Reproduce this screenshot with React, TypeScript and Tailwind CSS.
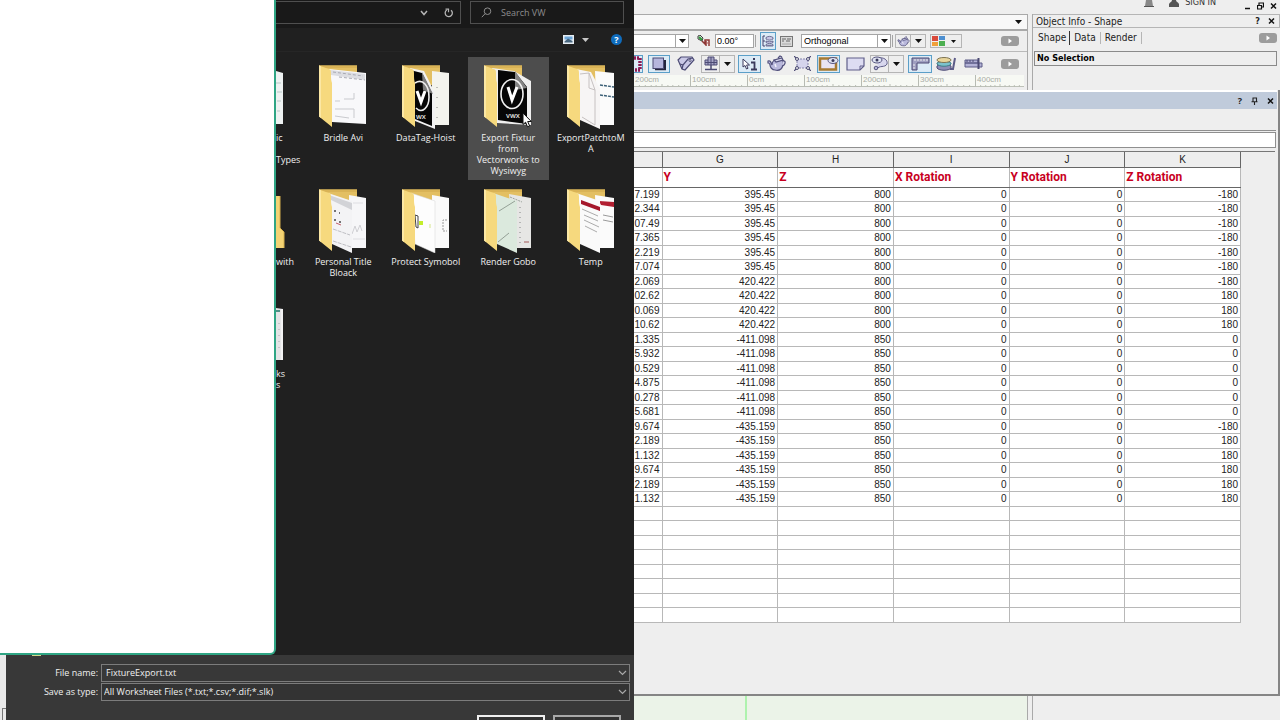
import { useState } from 'react';
import type { ReactNode } from 'react';

const UI = "font-['Open_Sans','Noto_Sans',sans-serif]";
const TAHOMA = "font-['DejaVu_Sans_Condensed','DejaVu_Sans',sans-serif]";
const ARIAL = "font-['Liberation_Sans',Arial,sans-serif]";

const ROWS: string[][] = [
  ['7.199', '395.45', '800', '-180'],
  ['2.344', '395.45', '800', '-180'],
  ['07.49', '395.45', '800', '-180'],
  ['7.365', '395.45', '800', '-180'],
  ['2.219', '395.45', '800', '-180'],
  ['7.074', '395.45', '800', '-180'],
  ['2.069', '420.422', '800', '-180'],
  ['02.62', '420.422', '800', '180'],
  ['0.069', '420.422', '800', '180'],
  ['10.62', '420.422', '800', '180'],
  ['1.335', '-411.098', '850', '0'],
  ['5.932', '-411.098', '850', '0'],
  ['0.529', '-411.098', '850', '0'],
  ['4.875', '-411.098', '850', '0'],
  ['0.278', '-411.098', '850', '0'],
  ['5.681', '-411.098', '850', '0'],
  ['9.674', '-435.159', '850', '-180'],
  ['2.189', '-435.159', '850', '180'],
  ['1.132', '-435.159', '850', '180'],
  ['9.674', '-435.159', '850', '180'],
  ['2.189', '-435.159', '850', '180'],
  ['1.132', '-435.159', '850', '180'],
];

const COLUMNS = [
  { letter: 'G', title: 'Y' },
  { letter: 'H', title: 'Z' },
  { letter: 'I', title: 'X Rotation' },
  { letter: 'J', title: 'Y Rotation' },
  { letter: 'K', title: 'Z Rotation' },
];

/* ---------- folder thumbnails ---------- */

function Folder({ children }: { children: ReactNode }) {
  return (
    <svg width="48" height="64" viewBox="0 0 48 64" aria-hidden="true">
      <path d="M0 0.5H38V20H10Z" fill="#e3bf62" />
      <path d="M0 0.5H38V3H2Z" fill="#d9b356" />
      {children}
      <path d="M0 0.5L11 4.5C13 6 11 13 13 18V62L0 51.5Z" fill="#f6d97e" />
      <path d="M0 0.5L2 1.2V53L0 51.5Z" fill="#fbe7a4" />
    </svg>
  );
}

function BridlePages() {
  return (
    <>
      <path d="M10 4L47 8V59L13 57Z" fill="#f8f8fa" />
      <path d="M11 5L46 9V15L12 10Z" fill="#dcdde2" />
      <path d="M14 7L44 11M20 12L46 15" stroke="#a9aab4" strokeWidth="1" strokeDasharray="3 2" />
      <path d="M25 34H35V28M16 44H35V53M16 36H21M16 51L30 53" fill="none" stroke="#c9cace" strokeWidth="1" />
    </>
  );
}

function HoistPages() {
  return (
    <>
      <path d="M30 6L47 8V60H30Z" fill="#f4f4ee" />
      <path d="M35 22V55" stroke="#8a8a8a" strokeWidth="1" strokeDasharray="1 9" />
      <path d="M8 3L22 6L33 28V64L13 56Z" fill="#f2f2f2" />
      <path d="M8 5L20 8L30 28V61L13 54Z" fill="#060606" />
      <path d="M20 7L21 25L31 29Z" fill="#7d7d7d" />
      <path d="M13 18C21 13 27 21 27 32C27 43 20 49 14 43" fill="none" stroke="#eee" strokeWidth="1.600" />
      <path d="M15 26L19 37L23 26" fill="none" stroke="#fff" strokeWidth="3" />
      <text x="14" y="54" fontSize="6" fontWeight="700" fill="#ddd">WX</text>
    </>
  );
}

function VwxPages() {
  return (
    <>
      <path d="M8 3L30 6L47 16V60L13 58Z" fill="#efefef" />
      <path d="M14 5L31 7L43 22V59L14 55Z" fill="#060606" />
      <path d="M31 6L31 25L43 23Z" fill="#858585" />
      <ellipse cx="28" cy="29" rx="11" ry="14.5" fill="none" stroke="#f2f2f2" strokeWidth="1.600" />
      <path d="M24 22L28 35L33 22" fill="none" stroke="#fff" strokeWidth="3" />
      <text x="22" y="53" fontSize="6" fontWeight="700" fill="#ddd">VWX</text>
    </>
  );
}

function PatchPages() {
  return (
    <>
      <path d="M28 6L47 8V60H30Z" fill="#fbfbfb" />
      <path d="M33 20L47 22M33 30L47 32" stroke="#3d6178" strokeWidth="1.500" strokeDasharray="3 1" />
      <path d="M9 4L24 7L33 24V64L13 55Z" fill="#f7f5f5" />
      <path d="M13 9L22 8L28 25V60L15 52M22 8V23L28 25" fill="none" stroke="#c6c1c1" strokeWidth="1" />
    </>
  );
}

function TitlePages() {
  return (
    <>
      <path d="M30 6L47 9V59H30Z" fill="#f6f6f8" />
      <path d="M33 45L36 37L38 43L41 36L43 42" fill="none" stroke="#d0d0d4" strokeWidth="1" />
      <path d="M34 14H44M34 50H46" stroke="#dedee2" strokeWidth="1" />
      <path d="M9 4L33 12V64L13 55Z" fill="#f3f3f5" />
      <path d="M10 6L33 14V21L12 11Z" fill="#d2d3d7" />
      <path d="M15 22H17M20 24H21M15 31H17M20 33H22" stroke="#4a4a4a" strokeWidth="1.500" />
      <path d="M17 34L22 36" stroke="#c0606a" strokeWidth="1" />
      <path d="M14 40L31 46M14 52L32 58" stroke="#bfbfc4" strokeWidth="1" strokeDasharray="4 1" />
    </>
  );
}

function SymbolPages() {
  return (
    <>
      <path d="M30 6L47 9V59H30Z" fill="#fafafa" />
      <path d="M45 31H41V42H45" fill="none" stroke="#999" strokeWidth="1" strokeDasharray="2 1" />
      <path d="M9 4L33 12V64L13 55Z" fill="#fdfdfd" stroke="#d6d6d6" strokeWidth="0.500" />
      <path d="M13 26L16 27V39L14 38Z" fill="none" stroke="#444" strokeWidth="1" />
      <rect x="17" y="32" width="4" height="4" fill="#c3ee2a" />
      <path d="M28 35V39" stroke="#d5e58a" strokeWidth="1" />
    </>
  );
}

function GoboPages() {
  return (
    <>
      <path d="M25 5L47 9V59H30Z" fill="#e6e6e4" />
      <path d="M36 18V55" stroke="#b4b4b4" strokeWidth="2" strokeDasharray="1 4" />
      <path d="M40 53H45" stroke="#a35a5a" strokeWidth="1" />
      <path d="M9 4L33 12V64L13 55Z" fill="#dbe9dd" />
      <path d="M15 22L31 12M14 53L25 44" stroke="#94a096" strokeWidth="1" />
      <path d="M26 8L38 13" stroke="#9aa39b" strokeWidth="1" strokeDasharray="2 1" />
    </>
  );
}

function TempPages() {
  return (
    <>
      <path d="M28 6L47 9V59H30Z" fill="#fbfbfb" />
      <path d="M32 12L47 13V18L34 16Z" fill="#b21f31" />
      <path d="M36 26L46 28M36 31L46 33" stroke="#9a9a9a" strokeWidth="1" />
      <path d="M9 4L33 12V64L13 55Z" fill="#fafafa" />
      <path d="M14 11L33 18V22L14 15Z" fill="#a5182b" />
      <path d="M15 20L31 27M17 26L31 32M17 31L32 38M18 37L30 43" stroke="#ababab" strokeWidth="1" />
    </>
  );
}

/* Thumbnails of the first column, whose left part lies under the white panel. */
function CutThumb({ kind }: { kind: 'paper' | 'folder' | 'sheet' }) {
  return (
    <svg width="9" height="64" viewBox="0 0 9 64" aria-hidden="true">
      {kind === 'paper' && (
        <>
          <path d="M0 6L7 8V59H0Z" fill="#eef2f2" />
          <path d="M0 18H5M1 27H6M1 36H5M1 46H4" stroke="#b9c8c8" strokeWidth="1" />
        </>
      )}
      {kind === 'folder' && (
        <>
          <path d="M0 7H4V39L8 43V59H0Z" fill="#f3d373" />
          <path d="M4 7V39L8 43V59" fill="none" stroke="#d3ae4d" strokeWidth="1" />
        </>
      )}
      {kind === 'sheet' && (
        <>
          <path d="M0 7L7 8V59H0Z" fill="#e4e4e6" />
          <path d="M0 10H4" stroke="#4f8f86" strokeWidth="2" />
          <path d="M3 22V52" stroke="#a9a9ad" strokeWidth="1" strokeDasharray="1 5" />
          <path d="M6 8V59" stroke="#fff" strokeWidth="1" />
        </>
      )}
    </svg>
  );
}

interface TileData {
  name: string;
  pages: ReactNode;
}

const FIRST_ROW: TileData[] = [
  { name: 'Bridle Avi', pages: <BridlePages /> },
  { name: 'DataTag-Hoist', pages: <HoistPages /> },
  { name: 'Export Fixtur from Vectorworks to Wysiwyg', pages: <VwxPages /> },
  { name: 'ExportPatchtoMA', pages: <PatchPages /> },
];

const SECOND_ROW: TileData[] = [
  { name: 'Personal Title Bloack', pages: <TitlePages /> },
  { name: 'Protect Symobol', pages: <SymbolPages /> },
  { name: 'Render Gobo', pages: <GoboPages /> },
  { name: 'Temp', pages: <TempPages /> },
];

function Tile({ tile, hovered }: { tile: TileData; hovered?: boolean }) {
  return (
    <button
      type="button"
      className={`relative mx-px flex flex-col items-center pt-2 ${hovered ? 'h-[123px] bg-[#4d4d4d]' : ''}`}
    >
      <Folder>{tile.pages}</Folder>
      <span className="mt-[3px] w-[70px] text-center leading-[11px] wrap-anywhere">{tile.name}</span>
      {hovered && (
        <svg className="absolute left-[54px] top-[55px]" width="11" height="17" viewBox="0 0 11 17" aria-hidden="true">
          <path d="M1 1V12.500L3.600 10.200L5.500 14.800L7.600 13.900L5.700 9.500H9.300Z" fill="#fff" stroke="#111" strokeWidth="1" />
        </svg>
      )}
    </button>
  );
}

function CutTile({ kind, lines }: { kind: 'paper' | 'folder' | 'sheet'; lines: string[] }) {
  return (
    <div className="flex flex-col pt-2">
      <CutThumb kind={kind} />
      <div className="mt-[3px] leading-[11px]">
        {lines.map((line, i) => (
          <div key={i} className="h-[11px]">{line}</div>
        ))}
      </div>
    </div>
  );
}

function FilePane() {
  return (
    <div className="flex min-w-0 flex-1 flex-col bg-[#202020]">
      <div className="flex h-7 items-start gap-[9px] bg-[#191919] pr-[10px] pt-px">
        <div className="flex h-[23px] flex-1 items-center justify-end gap-4 border border-l-0 border-[#4f4f4f] pr-[6px]">
          <button type="button" aria-label="Previous locations">
            <svg width="8" height="6" viewBox="0 0 8 6"><path d="M1 1L4 4.500L7 1" fill="none" stroke="#b5b5b5" strokeWidth="1.500" /></svg>
          </button>
          <button type="button" aria-label="Refresh">
            <svg width="10" height="10" viewBox="0 0 10 10">
              <path d="M2.800 2A3.600 3.600 0 1 0 7 2.200" fill="none" stroke="#b5b5b5" strokeWidth="1.300" />
              <path d="M1.500 1.200H4.500V4.200" fill="none" stroke="#b5b5b5" strokeWidth="1.200" />
            </svg>
          </button>
        </div>
        <label className="flex h-[23px] w-[154px] items-center gap-[9px] border border-[#4f4f4f] pl-[10px]">
          <svg width="11" height="11" viewBox="0 0 11 11" aria-hidden="true">
            <circle cx="6.500" cy="4.200" r="3.300" fill="none" stroke="#8d8d8d" strokeWidth="1" />
            <path d="M4.200 6.600L0.800 10.200" stroke="#8d8d8d" strokeWidth="1" />
          </svg>
          <input
            type="text"
            aria-label="Search VW"
            placeholder="Search VW"
            className="w-24 bg-transparent text-[9px] outline-none placeholder:text-[#8d8d8d]"
          />
        </label>
      </div>
      <div className="flex h-6 items-center justify-end border-b border-[#262626] pr-3">
        <button type="button" aria-label="Change your view" className="flex items-center gap-2">
          <svg width="11" height="9" viewBox="0 0 11 9">
            <rect width="11" height="9" fill="#e6edf3" />
            <rect x="1.500" y="1.500" width="8" height="3" fill="#6ba5d8" />
            <path d="M1.500 6.500L5 3.500L9.500 6V7.500H1.500Z" fill="#47667f" />
          </svg>
          <svg width="7" height="4" viewBox="0 0 7 4"><path d="M0 0H7L3.500 4Z" fill="#c8c8c8" /></svg>
        </button>
        <button
          type="button"
          aria-label="Help"
          className="ml-[22px] flex size-[11px] items-center justify-center rounded-full bg-[#0f6cbd] text-[9px] leading-none font-bold text-white"
        >
          ?
        </button>
      </div>
      <div className="mt-[5px] grid grid-cols-[26px_repeat(4,1fr)] grid-rows-[124px_112px_112px] pr-[2px] text-[9px] text-[#f0f0f0]">
        <CutTile kind="paper" lines={['ic', '', 'Types']} />
        {FIRST_ROW.map((tile, i) => (
          <Tile key={tile.name} tile={tile} hovered={i === 2} />
        ))}
        <CutTile kind="folder" lines={['with']} />
        {SECOND_ROW.map((tile) => (
          <Tile key={tile.name} tile={tile} />
        ))}
        <CutTile kind="sheet" lines={['ks', 's']} />
      </div>
    </div>
  );
}

function ComboArrow() {
  return (
    <svg className="pointer-events-none mr-[2px] shrink-0" width="9" height="6" viewBox="0 0 9 6" aria-hidden="true">
      <path d="M1 1L4.500 4.500L8 1" fill="none" stroke="#a8a8a8" strokeWidth="1.200" />
    </svg>
  );
}

function SaveForm() {
  const [fileName, setFileName] = useState('FixtureExport.txt');

  return (
    <div className="flex h-[65px] shrink-0 bg-[#383838]">
      <div className="flex w-[6px] items-end bg-[#e9e9e9]">
        <div className="ml-[2px] h-3 flex-1 border-l border-t border-[#777]" />
      </div>
      <form className="flex flex-1 flex-col pr-1 text-[9px] text-[#f0f0f0]" onSubmit={(e) => e.preventDefault()}>
        <div className="ml-[26px] h-px w-[9px] bg-[#d4d98a]" />
        <div className="mt-2 flex items-center gap-[3px]">
          <label htmlFor="file-name" className="w-[92px] text-right">File name:</label>
          <div className="flex h-[18px] flex-1 items-center border border-[#7c7c7c]">
            <input
              id="file-name"
              type="text"
              value={fileName}
              onChange={(e) => setFileName(e.target.value)}
              className="min-w-0 flex-1 bg-transparent pl-1 outline-none"
            />
            <ComboArrow />
          </div>
        </div>
        <div className="mt-px flex items-center gap-[3px]">
          <label htmlFor="save-type" className="w-[92px] text-right">Save as type:</label>
          <div className="flex h-[18px] flex-1 items-center border border-[#7c7c7c] bg-[#333]">
            <select id="save-type" className="min-w-0 flex-1 appearance-none bg-transparent pl-[2px] outline-none">
              <option>All Worksheet Files (*.txt;*.csv;*.dif;*.slk)</option>
            </select>
            <ComboArrow />
          </div>
        </div>
        <div className="mt-[14px] flex flex-1 justify-end gap-2 overflow-hidden pr-[9px]">
          <button type="submit" aria-label="Save" className="h-5 w-[68px] border-2 border-[#efefef] bg-[#333]" />
          <button type="button" aria-label="Cancel" className="h-5 w-[68px] border-2 border-[#a8a8a8] bg-[#333]" />
        </div>
      </form>
    </div>
  );
}

/* ---------- toolbars ---------- */

function Down() {
  return (
    <svg width="7" height="4" viewBox="0 0 7 4" aria-hidden="true">
      <path d="M0 0H7L3.500 4Z" fill="#111" />
    </svg>
  );
}

function Overflow({ className = '' }: { className?: string }) {
  return (
    <button
      type="button"
      aria-label="More"
      className={`flex h-[10px] w-[18px] shrink-0 items-center justify-center rounded-[3px] bg-[#9c9c9c] ${className}`}
    >
      <svg width="4" height="6" viewBox="0 0 4 6"><path d="M0.500 0.500L4 3L0.500 5.500Z" fill="#fff" /></svg>
    </button>
  );
}

function Tool({ label, active, className, children }: { label: string; active?: boolean; className: string; children: ReactNode }) {
  return (
    <button
      type="button"
      aria-label={label}
      aria-pressed={active}
      className={`flex h-[18px] shrink-0 items-center justify-center ${active ? 'border border-[#5b9fc8] bg-[#dcebf6]' : ''} ${className}`}
    >
      {children}
    </button>
  );
}

function SplitTool({ label, className, children }: { label: string; className: string; children: ReactNode }) {
  return (
    <button
      type="button"
      aria-label={label}
      className={`flex shrink-0 items-stretch border border-[#b5b5b5] ${className}`}
    >
      <span className="flex flex-1 items-center justify-center border-r border-[#b5b5b5]">{children}</span>
      <span className="flex w-[14px] items-center justify-center"><Down /></span>
    </button>
  );
}

function Teapot({ size }: { size: number }) {
  return (
    <svg width={size} height={size - 2} viewBox="0 0 19 17" aria-hidden="true">
      <path d="M1 6C3 5 4 7 5 10C5 6 8 4 12 4C15 4 17 6 16 10C15 14 12 16 8 15C5 15 3 12 3 10C3 9 2 8 1 8Z" fill="#b9b8dc" stroke="#51507c" strokeWidth="1.200" />
      <path d="M7 5L15 3L16 5L9 7ZM11 3L13 1L15 2M16 6C19 5 19 10 15 11" fill="#d8d7ee" stroke="#51507c" strokeWidth="1.200" />
      <path d="M8 9L9 12" stroke="#f2f2fb" strokeWidth="1.500" />
    </svg>
  );
}

function ViewBar() {
  return (
    <div className="flex h-5 items-center pr-2">
      <div className="flex h-[14px] w-[55px] shrink-0 items-stretch border border-l-0 border-[#a5a5a5] bg-white">
        <select aria-label="Saved view" className="w-0 flex-1 appearance-none bg-white outline-none" />
        <span className="flex w-[13px] items-center justify-center border-l border-[#a5a5a5]"><Down /></span>
      </div>
      <svg className="ml-2 shrink-0" width="14" height="12" viewBox="0 0 14 12" aria-hidden="true">
        <path d="M1 1L3 0L6 3L5 6L1 4Z" fill="#dfe8df" stroke="#3f3f3f" strokeWidth="1" />
        <path d="M2 2L5 5" stroke="#2f9a3a" strokeWidth="2" />
        <path d="M5 6L8 9V5H12V11M9 11V6" fill="none" stroke="#8f3836" strokeWidth="1.500" />
        <path d="M10 8H11" stroke="#d89a98" strokeWidth="2" />
      </svg>
      <input
        type="text"
        aria-label="Rotation"
        defaultValue="0.00°"
        className={`ml-1 h-[14px] w-[39px] shrink-0 border border-[#a5a5a5] bg-white pl-px text-[9px] outline-none ${ARIAL}`}
      />
      <span className="ml-px h-3 w-px bg-[#a5a5a5]" />
      <Tool label="Unified view" active className="ml-1 w-4">
        <svg width="12" height="12" viewBox="0 0 12 12">
          <path d="M1 1V11M1 1H3M1 6H3M1 11H3" fill="none" stroke="#44436c" strokeWidth="1" />
          <path d="M4 2.500C6 1 9 1 11 2.500V4C9 5.500 6 5.500 4 4ZM4 6C6 7 9 7 11 6V7.500C9 9 6 9 4 7.500ZM4 9.500C6 10.500 9 10.500 11 9.500V11H4Z" fill="#c7c6e4" stroke="#56557f" strokeWidth="0.800" />
        </svg>
      </Tool>
      <Tool label="View options" className="ml-[3px] w-[14px]">
        <svg width="13" height="11" viewBox="0 0 13 11">
          <rect x="0.500" y="0.500" width="12" height="10" fill="#d9d9d9" stroke="#777" />
          <path d="M2 3H6M7 3H11M2 5H4M6 5H10" stroke="#666" strokeWidth="1" />
          <path d="M2 8H11" stroke="#aaa" strokeWidth="1" />
        </svg>
      </Tool>
      <div className="ml-2 flex h-[14px] w-[90px] shrink-0 items-stretch border border-[#a5a5a5] bg-white">
        <select aria-label="Projection" className={`min-w-0 flex-1 appearance-none bg-white pl-[2px] text-[9px] leading-[12px] outline-none ${ARIAL}`}>
          <option>Orthogonal</option>
        </select>
        <span className="flex w-[13px] items-center justify-center border-l border-[#a5a5a5]"><Down /></span>
      </div>
      <span className="ml-px h-3 w-px bg-[#a5a5a5]" />
      <SplitTool label="Render mode" className="ml-[2px] h-[14px] w-[31px]"><Teapot size={13} /></SplitTool>
      <button type="button" aria-label="Colours" className="ml-1 flex h-[14px] w-8 shrink-0 items-center justify-between border border-[#b5b5b5] pr-[5px] pl-px">
        <svg width="13" height="10" viewBox="0 0 13 10">
          <rect width="6" height="5" fill="#d94a3c" /><rect x="7" width="6" height="4" fill="#4d8fd0" />
          <rect y="6" width="6" height="4" fill="#f0a03a" /><rect x="7" y="5" width="6" height="5" fill="#4caf50" />
        </svg>
        <svg width="5" height="3" viewBox="0 0 5 3"><path d="M0 0H5L2.500 3Z" fill="#111" /></svg>
      </button>
      <Overflow className="ml-auto" />
    </div>
  );
}

function ModeBar() {
  return (
    <div className="flex h-6 items-center border-t border-[#b9b9b9] pr-2">
      <Tool label="Marquee" active className="w-[9px] border-l-0">
        <svg width="8" height="16" viewBox="0 0 8 16">
          <path d="M0 2H6V14H0" fill="none" stroke="#8d1c55" strokeWidth="3.500" strokeDasharray="2 1" />
        </svg>
      </Tool>
      <Tool label="Drop shadow" active className="ml-[5px] w-[22px]">
        <svg width="14" height="14" viewBox="0 0 14 14">
          <path d="M3 12H13V3" fill="none" stroke="#24243c" strokeWidth="2.500" />
          <rect x="1" y="1" width="10.500" height="10.500" fill="#b6b6dd" stroke="#4c4b74" />
        </svg>
      </Tool>
      <Tool label="Tag" className="ml-[7px] w-[18px]">
        <svg width="18" height="15" viewBox="0 0 18 15">
          <path d="M1 4L4 1L15 1L17 4L8 14L5 13Z" fill="#c9c8e6" stroke="#4c4b74" strokeWidth="1.200" />
          <path d="M3 8L6 9L11 3L16 2M5 13L6 9" fill="none" stroke="#4c4b74" strokeWidth="1.200" />
          <circle cx="13" cy="4.500" r="1" fill="#fff" stroke="#4c4b74" />
        </svg>
      </Tool>
      <SplitTool label="Structure" className="ml-[6px] h-[18px] w-[34px]">
        <svg width="14" height="15" viewBox="0 0 14 15">
          <path d="M7 1V13M1 13.500H13" stroke="#4c4b74" strokeWidth="1.500" />
          <path d="M1 4V9H13V4H10V1H4V4Z" fill="#a5a4c6" stroke="#4c4b74" />
          <path d="M4 4V9M10 4V9M1 6.500H13M7 1V9" stroke="#4c4b74" strokeWidth="1" />
        </svg>
      </SplitTool>
      <Tool label="Interactive" active className="ml-[3px] w-[23px]">
        <svg width="15" height="14" viewBox="0 0 15 14">
          <path d="M1 2V10L3 8.500L4.500 12L6 11.300L4.600 8H7.500Z" fill="#fff" stroke="#3a3a5c" strokeWidth="1" />
          <path d="M9 5.500H12.500V12M9 12.500H15" fill="none" stroke="#3a3a5c" strokeWidth="1.800" />
          <path d="M11 2H13" stroke="#3a3a5c" strokeWidth="2" />
        </svg>
      </Tool>
      <Tool label="Render" className="ml-[6px] w-[19px]"><Teapot size={19} /></Tool>
      <Tool label="Reshape" className="ml-2 w-[17px]">
        <svg width="17" height="15" viewBox="0 0 17 15">
          <rect x="3" y="3" width="11" height="9" fill="#d5d4ec" stroke="#8685ac" strokeDasharray="2 1" />
          <g fill="#eee" stroke="#4c4b74">
            <circle cx="3" cy="3" r="1.500" /><circle cx="14" cy="3" r="1.500" />
            <circle cx="3" cy="12" r="1.500" /><circle cx="14" cy="12" r="1.500" />
          </g>
          <path d="M0 0L2 2M17 0L15 2M0 15L2 13M17 15L15 13" stroke="#4c4b74" strokeWidth="1.200" />
        </svg>
      </Tool>
      <Tool label="Viewport visibility" active className="ml-[6px] w-[23px]">
        <svg width="21" height="15" viewBox="0 0 21 15">
          <rect x="2" y="2.500" width="16" height="11" fill="#e9e4f2" stroke="#a77a31" strokeWidth="2.500" />
          <ellipse cx="15" cy="4.500" rx="5" ry="3" fill="#dfe3f1" stroke="#565580" />
          <circle cx="15" cy="4.500" r="1.500" fill="#3a3a5c" />
        </svg>
      </Tool>
      <Tool label="Sheet" className="ml-[6px] w-[19px]">
        <svg width="19" height="14" viewBox="0 0 19 14">
          <path d="M1 1H18V9L14 13H1Z" fill="#dddcf2" stroke="#605f8a" strokeWidth="1.200" />
          <path d="M18 9H14V13" fill="none" stroke="#605f8a" />
        </svg>
      </Tool>
      <SplitTool label="Visibility" className="ml-[5px] h-[18px] w-[34px]">
        <svg width="17" height="15" viewBox="0 0 17 15">
          <path d="M7 2C13 1 17 4 16 8C14 12 8 9 6 13" fill="#d8d7ee" stroke="#605f8a" />
          <ellipse cx="6" cy="4" rx="5" ry="3" fill="#dfe3f1" stroke="#565580" />
          <circle cx="6" cy="4" r="1.500" fill="#3a3a5c" />
          <circle cx="5" cy="12" r="1.800" fill="#b7b6d8" stroke="#565580" />
        </svg>
      </SplitTool>
      <Tool label="Rulers" active className="ml-1 w-6">
        <svg width="19" height="14" viewBox="0 0 19 14">
          <path d="M1 1H18V6H6V13H1Z" fill="#9f9fc0" stroke="#4c4b74" />
          <path d="M4 2V4M7 2V4M10 2V4M13 2V4M16 2V4M2 8H4M2 11H4" stroke="#eee" />
        </svg>
      </Tool>
      <Tool label="Layers" className="ml-1 w-5">
        <svg width="20" height="15" viewBox="0 0 20 15">
          <path d="M1 10C3 8 13 8 15 10V12C13 15 3 15 1 12Z" fill="#8e8db7" stroke="#4c4b74" />
          <path d="M1 7C3 5 13 5 15 7V8C13 11 3 11 1 8Z" fill="#7cc2cd" stroke="#3f7d87" />
          <ellipse cx="8" cy="4" rx="7" ry="2.500" fill="#e8d59b" stroke="#7e7453" />
          <path d="M19 2L17 13H14" fill="none" stroke="#5c5b88" strokeWidth="2" />
        </svg>
      </Tool>
      <Tool label="Align" className="ml-2 w-[19px]">
        <svg width="19" height="13" viewBox="0 0 19 13">
          <path d="M1 3H14V6H1ZM1 6H18V10H1Z" fill="#b3b2d6" stroke="#5b5a86" />
          <path d="M14.500 1V12" stroke="#4c4b74" strokeWidth="2" />
          <path d="M3 3V5M6 3V5M9 3V5" stroke="#4c4b74" />
        </svg>
      </Tool>
      <Overflow className="ml-auto" />
    </div>
  );
}

function RulerTicks() {
  return (
    <svg className="h-[3px] w-full" viewBox="0 0 57 3" preserveAspectRatio="none" aria-hidden="true">
      <path d="M0 2.500H57M5.500 1V3M11.500 1V3M17.500 1V3M22.500 1V3M28.500 0V3M34.500 1V3M39.500 1V3M45.500 1V3M51.500 1V3" fill="none" stroke="#b7bbb3" strokeWidth="1" />
    </svg>
  );
}

function Ruler() {
  return (
    <div className={`mr-[3px] grid grid-cols-[56px_repeat(5,57px)_1fr] bg-[#f7f9f4] text-[8px] leading-[9px] text-[#a9aca6] ${ARIAL}`}>
      {['200cm', '100cm', '0cm', '100cm', '200cm', '300cm', '400cm'].map((mark, i) => (
        <div key={i} className={`flex flex-col ${i === 0 ? '' : 'border-l border-[#b7bbb3]'}`}>
          <span className="pl-px">{mark}</span>
          <RulerTicks />
        </div>
      ))}
    </div>
  );
}

function PaletteMark({ kind }: { kind: 'help' | 'pin' | 'close' }) {
  if (kind === 'help') {
    return <button type="button" aria-label="Help" className="text-[9px] leading-none font-bold text-[#222]">?</button>;
  }
  return (
    <button type="button" aria-label={kind === 'pin' ? 'Pin' : 'Close'}>
      <svg width="7" height="8" viewBox="0 0 7 8">
        {kind === 'pin' ? (
          <path d="M1.500 1H5.500V4.500M2 1V4.500M0.500 4.800H6.500M3.500 5V8" fill="none" stroke="#222" strokeWidth="1.100" />
        ) : (
          <path d="M1 1.500L6 6.500M6 1.500L1 6.500" stroke="#111" strokeWidth="1.500" />
        )}
      </svg>
    </button>
  );
}

function MenuStrip() {
  return (
    <div className={`flex h-[14px] items-start justify-end pr-[3px] text-[9px] text-[#333] ${TAHOMA}`}>
      <svg width="10" height="7" viewBox="0 0 10 7" aria-hidden="true">
        <path d="M2 0H8L9 6H1Z" fill="#888" /><path d="M0 6.500H10" stroke="#555" />
      </svg>
      <button type="button" className="ml-[15px] flex items-start gap-[6px]">
        <svg width="10" height="8" viewBox="0 0 10 8" aria-hidden="true">
          <path d="M0 7V4C1 2 3 2 3 0H7C7 2 9 2 10 4V7Z" fill="#555" />
        </svg>
        <span className="-mt-[3px] leading-[10px]">SIGN IN</span>
      </button>
      <div className="ml-[29px] flex items-center gap-[6px] pt-[2px]">
        <button type="button" aria-label="Minimise">
          <svg width="6" height="8" viewBox="0 0 6 8"><path d="M0 6.500H5" stroke="#111" strokeWidth="1.500" /></svg>
        </button>
        <button type="button" aria-label="Restore">
          <svg width="7" height="8" viewBox="0 0 7 8"><path d="M2 3V1H6.500V5H5M0.500 3.500H4.500V7H0.500Z" fill="none" stroke="#111" strokeWidth="1.200" /></svg>
        </button>
        <PaletteMark kind="close" />
      </div>
    </div>
  );
}

function ObjectInfo() {
  return (
    <section className={`flex w-[248px] shrink-0 flex-col border-l border-[#a9a9a9] text-[10px] text-[#222] ${TAHOMA}`}>
      <div className="flex h-[14px] items-center justify-between border-y border-r border-[#b5b5b5] pl-[3px] pr-1">
        <h2>Object Info - Shape</h2>
        <div className="flex items-center gap-2">
          <PaletteMark kind="help" />
          <PaletteMark kind="close" />
        </div>
      </div>
      <div className="flex h-5 items-center justify-between pr-[3px] pl-[5px]">
        <div role="tablist" className="flex items-center">
          <button type="button" role="tab" aria-selected="true" className="border-r border-[#333] pr-[3px] leading-[14px]">Shape</button>
          <button type="button" role="tab" aria-selected="false" className="border-r border-[#b5b5b5] px-1 leading-[12px]">Data</button>
          <button type="button" role="tab" aria-selected="false" className="border-r border-[#b5b5b5] px-1 leading-[12px]">Render</button>
        </div>
        <Overflow />
      </div>
      <div className="mt-[3px] mr-[3px] ml-px flex h-[15px] items-center border border-[#8a8a8a] pl-[2px] text-[9px] font-bold text-black">
        No Selection
      </div>
    </section>
  );
}

/* ---------- worksheet ---------- */

function Worksheet() {
  return (
    <section className="flex flex-1 flex-col border-r-2 border-b-2 border-[#858585] bg-[#eee]">
      <div className="mr-px flex h-[19px] shrink-0 items-center justify-end gap-[9px] border-t-2 border-white bg-[#c0cbdb] pr-[3px]">
        <PaletteMark kind="help" />
        <PaletteMark kind="pin" />
        <PaletteMark kind="close" />
      </div>
      <div className="mt-[21px] mr-[2px] h-[18px] shrink-0 border-t border-[#8f8f8f] pt-px">
        <input
          type="text"
          aria-label="Cell formula"
          className="block h-4 w-full border border-l-0 border-[#8f8f8f] bg-white outline-none"
        />
      </div>
      <div className="mt-[3px] mr-[3px] flex-1 border-t border-[#777] pr-[34px]">
        <table className={`w-full table-fixed border-collapse bg-white text-[10px] text-[#222] ${ARIAL}`}>
          <colgroup>
            <col className="w-[28px]" />
            {COLUMNS.map((c) => <col key={c.letter} />)}
          </colgroup>
          <thead>
            <tr className="h-[15px] bg-[#eee] leading-[13px]">
              <th className="border-r border-b border-[#666] p-0" />
              {COLUMNS.map((c) => (
                <th key={c.letter} scope="col" className="border-r border-b border-[#666] p-0 font-normal">{c.letter}</th>
              ))}
            </tr>
          </thead>
          <tbody>
            <tr className="h-5 text-left font-['Roboto',sans-serif] text-[12px] leading-[14px] text-[#c8001e]">
              <td className="border-r border-b border-r-[#b8b8b8] border-b-[#666] p-0" />
              {COLUMNS.map((c) => (
                <th key={c.letter} className="border-r border-b border-r-[#b8b8b8] border-b-[#666] py-0 pr-0 pl-px font-bold">{c.title}</th>
              ))}
            </tr>
            {ROWS.map(([x, y, z, rotation], i) => (
              <tr key={i} className="h-[15px] text-right leading-[13px] even:h-[14px]">
                {[x, y, z, '0', '0', rotation].map((value, j) => (
                  <td key={j} className="border-r border-b border-[#b8b8b8] py-0 pr-[2px] pl-0">{value}</td>
                ))}
              </tr>
            ))}
            {Array.from({ length: 8 }, (_, i) => (
              <tr key={i} className="h-[15px] even:h-[14px]">
                {Array.from({ length: 6 }, (_, j) => (
                  <td key={j} className="border-r border-b border-[#b8b8b8] p-0" />
                ))}
              </tr>
            ))}
          </tbody>
        </table>
      </div>
    </section>
  );
}

export default function App() {
  return (
    <div className={`flex h-screen overflow-hidden bg-[#eee] ${UI}`}>
      <section className="flex w-[634px] shrink-0 flex-col bg-[#202020]">
        <div className="flex min-h-0 flex-1">
          <div className="w-[276px] shrink-0 rounded-br-md border-r-2 border-b-2 border-[#2fa584] bg-white" />
          <FilePane />
        </div>
        <SaveForm />
      </section>

      <main className="flex min-w-0 flex-1 flex-col">
        <MenuStrip />
        <div className="flex h-[76px] shrink-0">
          <div className="mr-1 flex min-w-0 flex-1 flex-col border-r border-[#a9a9a9]">
            <div className="flex h-[17px] shrink-0 items-center justify-between border-t border-b-2 border-[#a9a9a9] bg-[#f8f8f8] pr-[5px]">
              <input type="text" aria-label="Search" className="h-3 min-w-0 flex-1 bg-transparent outline-none" />
              <Down />
            </div>
            <ViewBar />
            <ModeBar />
            <Ruler />
          </div>
          <ObjectInfo />
        </div>
        <Worksheet />
        <div className="flex h-6 shrink-0">
          <div className="mr-1 flex flex-1 border-r border-[#a9a9a9] bg-[#ebf3e8]">
            <div className="ml-[111px] w-[2px] bg-[#aef2ae]" />
          </div>
          <div className="w-[248px] border-l border-[#a9a9a9]" />
        </div>
      </main>
    </div>
  );
}
